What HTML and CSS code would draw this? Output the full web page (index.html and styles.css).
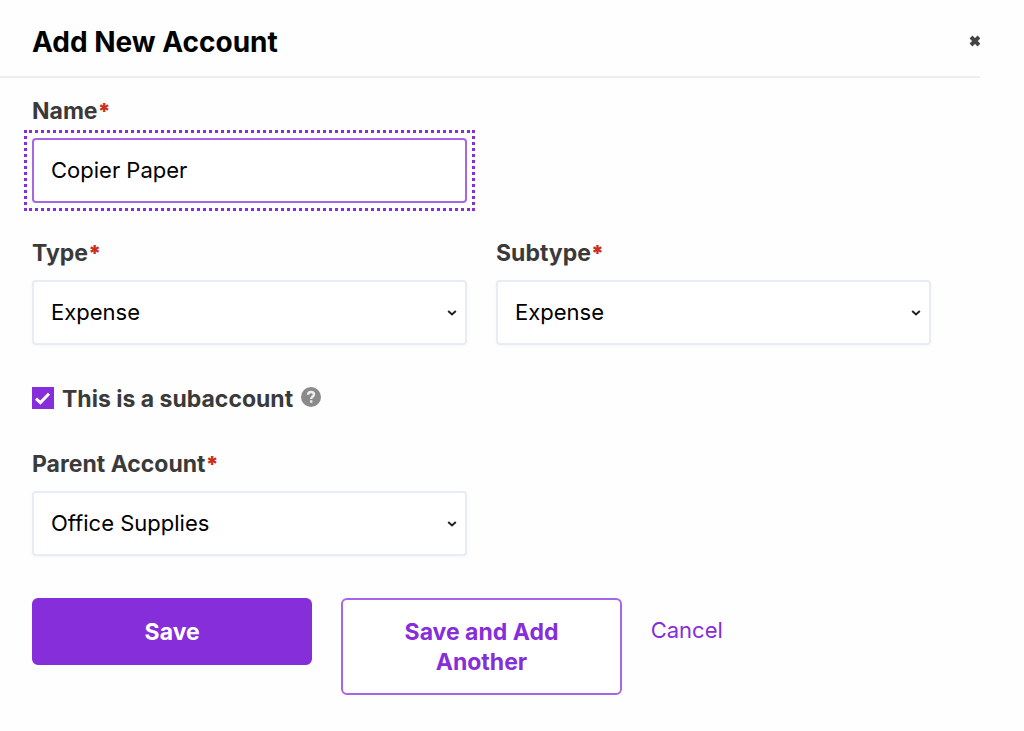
FILE: index.html
```html
<!DOCTYPE html>
<html lang="en">
<head>
<meta charset="utf-8">
<meta name="viewport" content="width=device-width, initial-scale=1">
<title>Add New Account</title>
<link rel="stylesheet" href="styles.css">
</head>
<body>
<main class="panel">
  <header class="panel-header">
    <h1 class="panel-title">Add New Account</h1>
    <button class="close" type="button" aria-label="Close">
      <svg class="close-icon" viewBox="0 0 14 14" aria-hidden="true"><path d="M3 2 11 10M11 2 3 10"/></svg>
    </button>
  </header>
  <form class="form">
    <div class="row">
      <div class="field">
        <label class="label" for="name">Name<span class="required">*</span></label>
        <div class="control control-focus">
          <input class="input input-active" id="name" type="text" value="Copier Paper">
        </div>
      </div>
    </div>
    <div class="row row-type">
      <div class="field">
        <label class="label" for="type">Type<span class="required">*</span></label>
        <div class="control">
          <select class="input" id="type"><option>Expense</option></select>
          <svg class="chevron" viewBox="0 0 10 6" aria-hidden="true"><path d="M1.2 1 5 4.4 8.8 1"/></svg>
        </div>
      </div>
      <div class="field">
        <label class="label" for="subtype">Subtype<span class="required">*</span></label>
        <div class="control">
          <select class="input" id="subtype"><option>Expense</option></select>
          <svg class="chevron" viewBox="0 0 10 6" aria-hidden="true"><path d="M1.2 1 5 4.4 8.8 1"/></svg>
        </div>
      </div>
    </div>
    <div class="check-row">
      <span class="check">
        <input class="checkbox" id="subaccount" type="checkbox" checked>
        <svg class="check-icon" viewBox="0 0 22 22" aria-hidden="true"><path d="M4 11.6 8.4 15.6 17 6.8"/></svg>
      </span>
      <label class="label" for="subaccount">This is a subaccount</label>
      <svg class="help" viewBox="0 0 20 20" role="img" aria-label="Help"><circle cx="10" cy="10" r="10"/><path d="M7 7.7C7.1 5.8 8.4 5 10 5c1.7 0 3 .9 3 2.5 0 2-2.8 2-2.8 4.5M10.2 13.3v2.4"/></svg>
    </div>
    <div class="row">
      <div class="field">
        <label class="label" for="parent">Parent Account<span class="required">*</span></label>
        <div class="control">
          <select class="input" id="parent"><option>Office Supplies</option></select>
          <svg class="chevron" viewBox="0 0 10 6" aria-hidden="true"><path d="M1.2 1 5 4.4 8.8 1"/></svg>
        </div>
      </div>
    </div>
    <div class="actions">
      <button class="button button-primary" type="submit">Save</button>
      <button class="button" type="button">Save and Add Another</button>
      <a class="cancel" href="#">Cancel</a>
    </div>
  </form>
</main>
</body>
</html>
```
FILE: styles.css
```css
* {
  box-sizing: border-box;
}

body {
  margin: 0;
  background: #fefefe;
  color: #000;
  font-family: Inter, "Liberation Sans", sans-serif;
  font-size: 23px;
  line-height: 30px;
}

.panel {
  margin-right: 44px;
}

.panel-header {
  display: flex;
  align-items: center;
  justify-content: space-between;
  padding: 24px 0 16px 32px;
  border-bottom: 2px solid #eee;
  overflow: hidden;
}

.panel-title {
  margin: 0;
  font-size: 28px;
  line-height: 36px;
  font-weight: 700;
}

.close {
  display: flex;
  margin-right: -2px;
  padding: 0;
  border: 0;
  background: none;
}

.close-icon {
  width: 14px;
  height: 14px;
  fill: none;
  stroke: #444;
  stroke-width: 4;
}

.form {
  padding: 18px 49px 36px 32px;
}

.row {
  display: grid;
  grid-template-columns: 1fr 1fr;
  gap: 29px;
}

.row-type {
  margin-top: 35px;
}

.field {
  display: flex;
  flex-direction: column;
  gap: 12px;
}

.label {
  color: #3a3a3a;
  font-weight: 700;
}

.required {
  color: #c9301c;
  font-size: 22px;
  font-weight: 900;
  line-height: 1;
}

.control {
  display: grid;
  align-items: center;
}

.control-focus {
  outline: 3px dotted #852ed9;
  outline-offset: 5px;
}

.input,
.chevron {
  grid-area: 1 / 1;
}

.input {
  width: 100%;
  height: 65px;
  margin: 0;
  padding: 0 17px 2px;
  border: 2px solid #e8edf5;
  border-radius: 4px;
  background: #fff;
  box-shadow: 0 1px 3px rgba(0, 0, 0, 0.04);
  color: #000;
  font: inherit;
  font-size: 22px;
  appearance: none;
}

.input-active {
  border-color: #a865e8;
  box-shadow: none;
  outline: none;
}

.chevron {
  justify-self: end;
  width: 10px;
  height: 6px;
  margin-right: 10px;
  fill: none;
  stroke: #222;
  stroke-width: 2;
  pointer-events: none;
}

.check-row {
  display: flex;
  align-items: center;
  gap: 8px;
  margin: 39px 0 35px;
}

.check {
  display: grid;
  margin-bottom: 2px;
}

.checkbox,
.check-icon {
  grid-area: 1 / 1;
  width: 22px;
  height: 22px;
}

.checkbox {
  margin: 0;
  background: #852ed9;
  appearance: none;
}

.check-icon {
  fill: none;
  stroke: #fff;
  stroke-width: 3;
  pointer-events: none;
}

.help {
  width: 20px;
  height: 20px;
  margin-bottom: 4px;
}

.help circle {
  fill: #8a8a8a;
}

.help path {
  fill: none;
  stroke: #eee;
  stroke-width: 2.4;
}

.actions {
  display: grid;
  grid-template-columns: repeat(3, 1fr);
  align-items: start;
  gap: 29px;
  margin-top: 42px;
}

.button {
  padding: 17px 56px 16px;
  border: 2px solid #a865e8;
  border-radius: 6px;
  background: #fff;
  color: #852ed9;
  font: inherit;
  font-weight: 700;
}

.button-primary {
  border-color: #852ed9;
  background: #852ed9;
  color: #fff;
}

.cancel {
  padding-top: 17px;
  color: #852ed9;
  font-size: 22px;
  text-decoration: none;
}
```
